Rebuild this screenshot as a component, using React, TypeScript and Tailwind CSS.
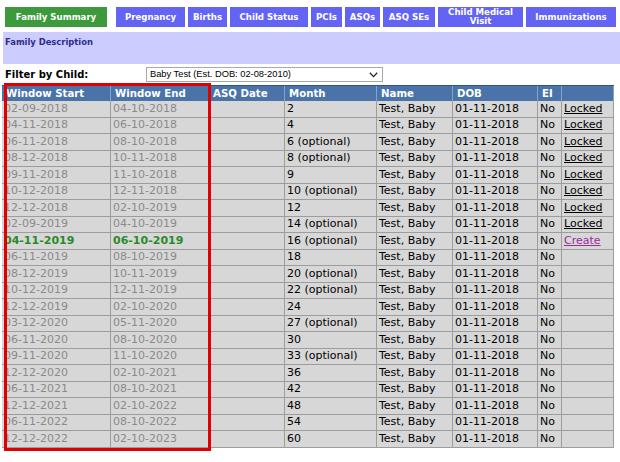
import React from "react";

type Row = {
  start: string;
  end: string;
  month: string;
  action?: "Locked" | "Create";
  current?: boolean;
};

const rows: Row[] = [
  { start: "02-09-2018", end: "04-10-2018", month: "2", action: "Locked" },
  { start: "04-11-2018", end: "06-10-2018", month: "4", action: "Locked" },
  { start: "06-11-2018", end: "08-10-2018", month: "6 (optional)", action: "Locked" },
  { start: "08-12-2018", end: "10-11-2018", month: "8 (optional)", action: "Locked" },
  { start: "09-11-2018", end: "11-10-2018", month: "9", action: "Locked" },
  { start: "10-12-2018", end: "12-11-2018", month: "10 (optional)", action: "Locked" },
  { start: "12-12-2018", end: "02-10-2019", month: "12", action: "Locked" },
  { start: "02-09-2019", end: "04-10-2019", month: "14 (optional)", action: "Locked" },
  { start: "04-11-2019", end: "06-10-2019", month: "16 (optional)", action: "Create", current: true },
  { start: "06-11-2019", end: "08-10-2019", month: "18" },
  { start: "08-12-2019", end: "10-11-2019", month: "20 (optional)" },
  { start: "10-12-2019", end: "12-11-2019", month: "22 (optional)" },
  { start: "12-12-2019", end: "02-10-2020", month: "24" },
  { start: "03-12-2020", end: "05-11-2020", month: "27 (optional)" },
  { start: "06-11-2020", end: "08-10-2020", month: "30" },
  { start: "09-11-2020", end: "11-10-2020", month: "33 (optional)" },
  { start: "12-12-2020", end: "02-10-2021", month: "36" },
  { start: "06-11-2021", end: "08-10-2021", month: "42" },
  { start: "12-12-2021", end: "02-10-2022", month: "48" },
  { start: "06-11-2022", end: "08-10-2022", month: "54" },
  { start: "12-12-2022", end: "02-10-2023", month: "60" },
];

const tabs = [
  { label: "Family Summary", w: "w-[102px]", active: true },
  { label: "Pregnancy", w: "w-[69px] ml-[6px]" },
  { label: "Births", w: "w-[39px]" },
  { label: "Child Status", w: "w-[78px]" },
  { label: "PCIs", w: "w-[31px]" },
  { label: "ASQs", w: "w-[35px]" },
  { label: "ASQ SEs", w: "w-[52px]" },
  { label: "Child Medical Visit", w: "w-[85px] px-[2px]" },
  { label: "Immunizations", w: "w-[90px]" },
];

const Tab: React.FC<{ label: string; w: string; active?: boolean }> = ({
  label,
  w,
  active,
}) => (
  <div
    className={`${w} h-[20px] flex items-center justify-center text-center text-white font-bold text-[8.6px] leading-[9px] ${
      active ? "bg-[#3c9a3c]" : "bg-[#6464f4]"
    }`}
  >
    {label}
  </div>
);

// column widths, left to right
const HEAD = [
  { label: "Window Start", w: "w-[109px]" },
  { label: "Window End", w: "w-[98px]" },
  { label: "ASQ Date", w: "w-[76px]" },
  { label: "Month", w: "w-[92px]" },
  { label: "Name", w: "w-[76px]" },
  { label: "DOB", w: "w-[85px]" },
  { label: "EI", w: "w-[24px]" },
  { label: "", w: "w-[52px]" },
];

const cell =
  "h-full flex items-center pl-[2px] whitespace-nowrap overflow-hidden border-r border-[#9d9d9d]";

export default function App() {
  return (
    <div className="relative w-[620px] h-[462px] overflow-hidden bg-white font-['DejaVu_Sans',Verdana,sans-serif]">
      <div className="flex gap-[3px] pl-[5px] pt-[7px]">
        {tabs.map((t) => (
          <Tab key={t.label} {...t} />
        ))}
      </div>

      <div className="mt-[5px] ml-[3px] h-[32px] bg-[#ccccff] pl-[2px] pt-[4px] text-[8.4px] font-bold text-[#2c2c8e]">
        Family Description
      </div>

      <div className="flex items-center h-[21px] pl-[5px]">
        <span className="w-[141px] text-[10px] font-bold text-black">
          Filter by Child:
        </span>
        <div className="relative w-[237px] h-[15px] border border-[#a9a9a9] bg-white flex items-center pl-[3px] font-['Liberation_Sans',Arial,sans-serif] text-[9.3px] text-black">
          Baby Test (Est. DOB: 02-08-2010)
          <svg
            className="absolute right-[4px] top-[4px]"
            width="9"
            height="6"
            viewBox="0 0 9 6"
            fill="none"
          >
            <path d="M0.8 0.8 L4.5 4.6 L8.2 0.8" stroke="#222" strokeWidth="1.3" />
          </svg>
        </div>
      </div>

      <div className="ml-[2px] w-[612px]">
        <div className="flex h-[16px] bg-[#4a73a9] border-t border-[#2e5489]">
          {HEAD.map((h, i) => (
            <div
              key={i}
              className={`${h.w} h-full flex items-center pl-[4px] text-white font-bold text-[10.2px] whitespace-nowrap border-r border-[#86a3c9]`}
            >
              {h.label}
            </div>
          ))}
        </div>
        {rows.map((r) => {
          const dateColor = r.current
            ? "text-[#2a8a2a] font-bold"
            : "text-[#8a8a8a]";
          return (
            <div
              key={r.start}
              className="flex h-[16.5px] bg-[#d7d7d7] border-b border-[#9d9d9d] text-[11px] text-black"
            >
              <div className={`${cell} w-[109px] ${dateColor}`}>{r.start}</div>
              <div className={`${cell} w-[98px] ${dateColor}`}>{r.end}</div>
              <div className={`${cell} w-[76px]`} />
              <div className={`${cell} w-[92px]`}>{r.month}</div>
              <div className={`${cell} w-[76px]`}>Test, Baby</div>
              <div className={`${cell} w-[85px]`}>01-11-2018</div>
              <div className={`${cell} w-[24px]`}>No</div>
              <div className={`${cell} w-[52px]`}>
                {r.action === "Locked" && (
                  <span className="underline text-black">Locked</span>
                )}
                {r.action === "Create" && (
                  <span className="underline text-[#9a2c9a]">Create</span>
                )}
              </div>
            </div>
          );
        })}
      </div>

      {/* highlight box drawn over the window columns */}
      <div className="absolute left-[4px] top-[83px] w-[207px] h-[368px] border-[3px] border-[#e00000] pointer-events-none" />
    </div>
  );
}
